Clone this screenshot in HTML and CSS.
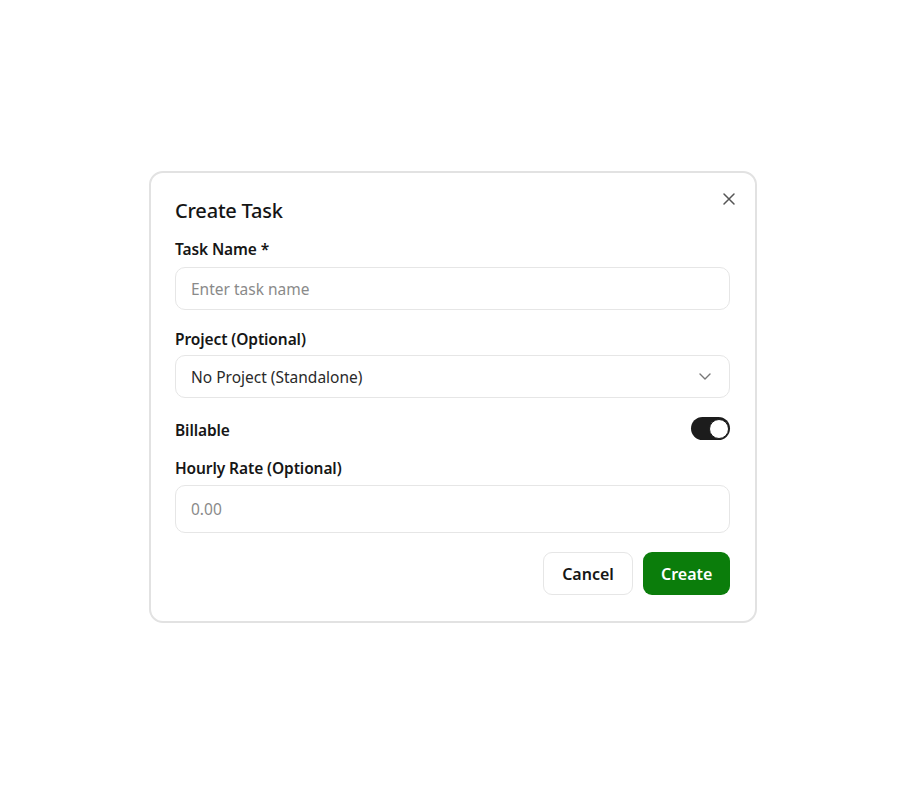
FILE: index.html
```html
<!DOCTYPE html>
<html lang="en">
<head>
<meta charset="utf-8">
<title>Create Task</title>
<link rel="stylesheet" href="styles.css">
</head>
<body>
<div class="overlay">
  <div class="dialog">
    <button class="close" aria-label="Close">
      <svg width="14" height="14" viewBox="0 0 14 14"><path d="M2 2 L12 12 M12 2 L2 12" stroke="#555" stroke-width="1.5" fill="none" stroke-linecap="round"/></svg>
    </button>
    <h2 class="title">Create Task</h2>
    <label class="label l-task">Task Name *</label>
    <div class="input">Enter task name</div>
    <label class="label l-project">Project (Optional)</label>
    <div class="input select">
      <span class="value">No Project (Standalone)</span>
      <svg width="12" height="7" viewBox="0 0 12 7"><path d="M1 1 L6 6 L11 1" stroke="#777" stroke-width="1.4" fill="none" stroke-linecap="round" stroke-linejoin="round"/></svg>
    </div>
    <div class="row">
      <span class="label">Billable</span>
      <span class="toggle"><span class="knob"></span></span>
    </div>
    <label class="label l-rate">Hourly Rate (Optional)</label>
    <div class="input tall">0.00</div>
    <div class="actions">
      <button class="btn cancel">Cancel</button>
      <button class="btn create">Create</button>
    </div>
  </div>
</div>
</body>
</html>
```
FILE: styles.css
```css
* { box-sizing: border-box; }
html, body { margin: 0; padding: 0; background: #fff; }
body {
  font-family: "Noto Sans", "Open Sans", sans-serif;
  color: #111;
}
.overlay {
  padding-top: 171px;
  padding-left: 149px;
}
.dialog {
  position: relative;
  width: 608px;
  border: 2.5px solid #e2e2e2;
  border-radius: 14px;
  padding: 24px 25px 26px 24px;
  display: flex;
  flex-direction: column;
  background: #fff;
}
.close {
  position: absolute;
  top: 16px;
  right: 16px;
  width: 20px;
  height: 20px;
  border: 0;
  background: none;
  padding: 3px;
  display: flex;
  align-items: center;
  justify-content: center;
}
.title {
  margin: 0;
  font-size: 20px;
  font-weight: 500;
  line-height: 28px;
  letter-spacing: -0.2px;
  color: #151515;
}
.label {
  font-size: 15.5px;
  font-weight: 600;
  line-height: 22px;
  color: #161616;
  letter-spacing: -0.1px;
}
.l-task { margin-top: 13px; margin-bottom: 7px; }
.l-project { margin-top: 18px; margin-bottom: 5px; }
.l-rate { margin-top: 15px; margin-bottom: 6px; }
.input {
  height: 43px;
  border: 1.5px solid #e6e6e6;
  border-radius: 10px;
  padding: 0 15px;
  display: flex;
  align-items: center;
  font-size: 15.5px;
  color: #8a8a8a;
}
.select { justify-content: space-between; padding-right: 18px; }
.select .value { color: #2a2a2a; }
.tall { height: 48px; }
.row {
  margin-top: 20px;
  height: 24px;
  display: flex;
  align-items: center;
  justify-content: space-between;
}
.toggle {
  width: 39px;
  height: 23px;
  border-radius: 12px;
  background: #1c1c1c;
  display: flex;
  align-items: center;
  justify-content: flex-end;
  padding-right: 1.5px;
  margin-top: -3px;
}
.knob {
  width: 20px;
  height: 20px;
  border-radius: 50%;
  background: #fff;
  border: 1px solid #1c1c1c;
}
.actions {
  margin-top: 19px;
  display: flex;
  justify-content: flex-end;
  gap: 10px;
}
.btn {
  height: 43px;
  border-radius: 9px;
  font-family: inherit;
  font-size: 16px;
  font-weight: 600;
  padding: 0 18px;
}
.cancel {
  width: 90px;
  background: #fff;
  border: 1.5px solid #e6e6e6;
  color: #161616;
}
.create {
  width: 87px;
  background: #0b7d0b;
  border: 0;
  color: #fff;
}
```
